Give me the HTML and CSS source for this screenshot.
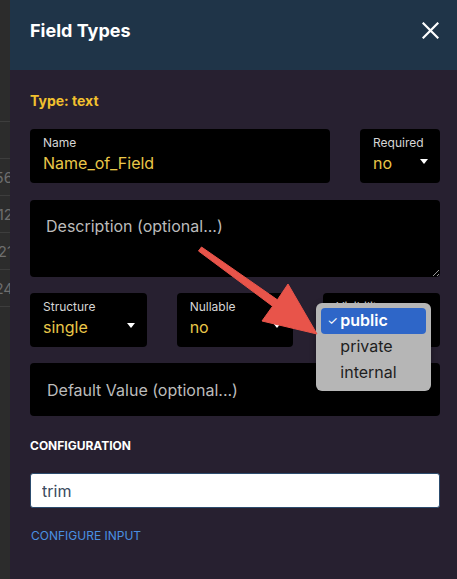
FILE: index.html
```html
<!DOCTYPE html>
<html>
<head>
    <meta charset="UTF-8">
    <title>Field Types</title>
    <link rel="stylesheet" href="styles.css">
</head>
<body>
<div id="page">

    <div class="behind">
        <div class="row"></div>
        <div class="row"><span>3456</span></div>
        <div class="row"><span>9012</span></div>
        <div class="row"><span>4321</span></div>
        <div class="row"><span>1224</span></div>
        <div class="row"></div>
    </div>

    <div class="panel">
        <div class="head">
            <h2>Field Types</h2>
            <span class="close">
                <svg width="17" height="17" viewBox="0 0 17 17"><path d="M1.5 1.5L15.5 15.5M15.5 1.5L1.5 15.5" stroke="#fff" stroke-width="2.2" stroke-linecap="square"/></svg>
            </span>
        </div>

        <div class="body">
            <h3 class="type">Type: text</h3>

            <div class="grid two">
                <div class="field">
                    <label>Name</label>
                    <div class="value">Name_of_Field</div>
                </div>
                <div class="field">
                    <label>Required</label>
                    <div class="value">no <i class="caret"></i></div>
                </div>
            </div>

            <textarea class="area" placeholder="Description (optional...)"></textarea>

            <div class="grid three">
                <div class="field">
                    <label>Structure</label>
                    <div class="value">single <i class="caret"></i></div>
                </div>
                <div class="field">
                    <label>Nullable</label>
                    <div class="value">no <i class="caret"></i></div>
                </div>
                <div class="field vis">
                    <label>Visibility</label>
                    <div class="value">public <i class="caret"></i></div>
                    <ul class="menu">
                        <li class="on"><b>&#10003;</b>public</li>
                        <li>private</li>
                        <li>internal</li>
                    </ul>
                </div>
            </div>

            <input class="wide" type="text" placeholder="Default Value (optional...)">

            <h4 class="section">CONFIGURATION</h4>
            <input class="config" type="text" value="trim">
            <a class="link">CONFIGURE INPUT</a>
        </div>
    </div>

    <svg class="arrow" width="457" height="579" viewBox="0 0 457 579">
        <path d="M201.5 247 L277.4 299.8 L288 284 L317 334 L262 321 L272.6 306.2 L198.5 251 Z" fill="#e8544a" stroke="#e8544a" stroke-width="1" stroke-linejoin="round"/>
    </svg>

</div>
</body>
</html>
```

FILE: styles.css
```css
body{margin:0;font-family: Inter,"Noto Sans",sans-serif;background:#2c2c2c;}
h2,h3,h4,ul,li{margin:0;padding:0;list-style:none;}

#page{
    position: relative;
    display: flex;
    width: 457px;
    height: 579px;
    overflow: hidden;
}
#page .behind{
    width: 10px;
    padding-top: 121px;
    overflow: hidden;
    flex-shrink: 0;
}
#page .behind .row{
    display: flex;
    justify-content: flex-end;
    align-items: center;
    height: 36px;
    border-top: 1px solid #3d3d3d;
    font-size: 15px;
    color: #6e6e6e;
}
#page .behind .row span{
    margin-right: -3px;
}

#page .panel{
    flex: 1;
    background-color: #272030;
}
#page .head{
    display: flex;
    justify-content: space-between;
    align-items: flex-start;
    height: 70px;
    padding: 20px 18px 0 20px;
    box-sizing: border-box;
    background-color: #1f3448;
}
#page .head h2{
    font-size: 18px;
    line-height: 22px;
    font-weight: 700;
    color: #fff;
}
#page .head .close{
    display: block;
    width: 17px;
    height: 17px;
    margin-top: 2px;
}

#page .body{
    display: flex;
    flex-direction: column;
    padding: 22px 17px 0 20px;
}
#page .type{
    font-size: 14px;
    line-height: 17px;
    font-weight: 700;
    color: #f2c12e;
    margin-bottom: 20px;
}
#page .grid{
    display: grid;
    column-gap: 30px;
}
#page .grid.two{
    grid-template-columns: 1fr 80px;
}
#page .grid.three{
    grid-template-columns: 1fr 1fr 1fr;
}
#page .field{
    position: relative;
    height: 54px;
    padding: 7px 12px 0 13px;
    box-sizing: border-box;
    background-color: #000;
    border-radius: 4px;
}
#page .field label{
    display: block;
    font-size: 12px;
    line-height: 14px;
    color: #d6d6d6;
    margin-bottom: 3px;
}
#page .field .value{
    display: flex;
    justify-content: space-between;
    align-items: center;
    font-size: 16px;
    line-height: 20px;
    color: #eac749;
}
#page .caret{
    width: 0;
    height: 0;
    margin-top: -4px;
    border-left: 4.5px solid transparent;
    border-right: 4.5px solid transparent;
    border-top: 5px solid #fff;
}

#page .area{
    display: block;
    height: 77px;
    margin: 17px 0 16px;
    padding: 16px 16px;
    box-sizing: border-box;
    border: none;
    border-radius: 4px;
    background-color: #000;
    color: #ddd;
    font-family: Inter,"Noto Sans",sans-serif;
    font-size: 16px;
    line-height: 20px;
    resize: vertical;
    outline: none;
    color-scheme: dark;
}
#page .area::placeholder,
#page .wide::placeholder{
    color: #bcbcbc;
}

#page .vis .menu{
    position: absolute;
    left: -7px;
    top: 10px;
    z-index: 3;
    width: 115px;
    height: 88px;
    padding: 5px;
    box-sizing: border-box;
    background-color: #b6b6b6;
    border-radius: 6px;
    box-shadow: 0 2px 6px rgba(0,0,0,.35);
}
#page .menu li{
    position: relative;
    height: 26px;
    padding-left: 19px;
    font-size: 16px;
    line-height: 25px;
    color: #1e1e1e;
    border-radius: 4px;
}
#page .menu li.on{
    background-color: #2e66c8;
    color: #fff;
    font-weight: 600;
}
#page .menu li b{
    position: absolute;
    left: 6px;
    top: 0;
    font-size: 12px;
    font-weight: 400;
}

#page .wide{
    display: block;
    height: 53px;
    margin-top: 16px;
    padding: 0 17px;
    box-sizing: border-box;
    border: none;
    border-radius: 4px;
    background-color: #000;
    font-family: Inter,"Noto Sans",sans-serif;
    font-size: 16px;
    color: #ddd;
    outline: none;
}
#page .section{
    margin-top: 22px;
    font-size: 12px;
    line-height: 15px;
    font-weight: 700;
    color: #fff;
}
#page .config{
    display: block;
    height: 35px;
    margin-top: 20px;
    padding: 0 11px;
    box-sizing: border-box;
    border: 1px solid #2c4c6e;
    border-radius: 3px;
    background-color: #fff;
    font-family: Inter,"Noto Sans",sans-serif;
    font-size: 16px;
    color: #3a4a5e;
    outline: none;
}
#page .link{
    margin-top: 20px;
    padding-left: 1px;
    font-size: 12px;
    line-height: 15px;
    color: #4a90e2;
    cursor: pointer;
}

#page .arrow{
    position: absolute;
    left: 0;
    top: 0;
    z-index: 5;
    pointer-events: none;
}
```
